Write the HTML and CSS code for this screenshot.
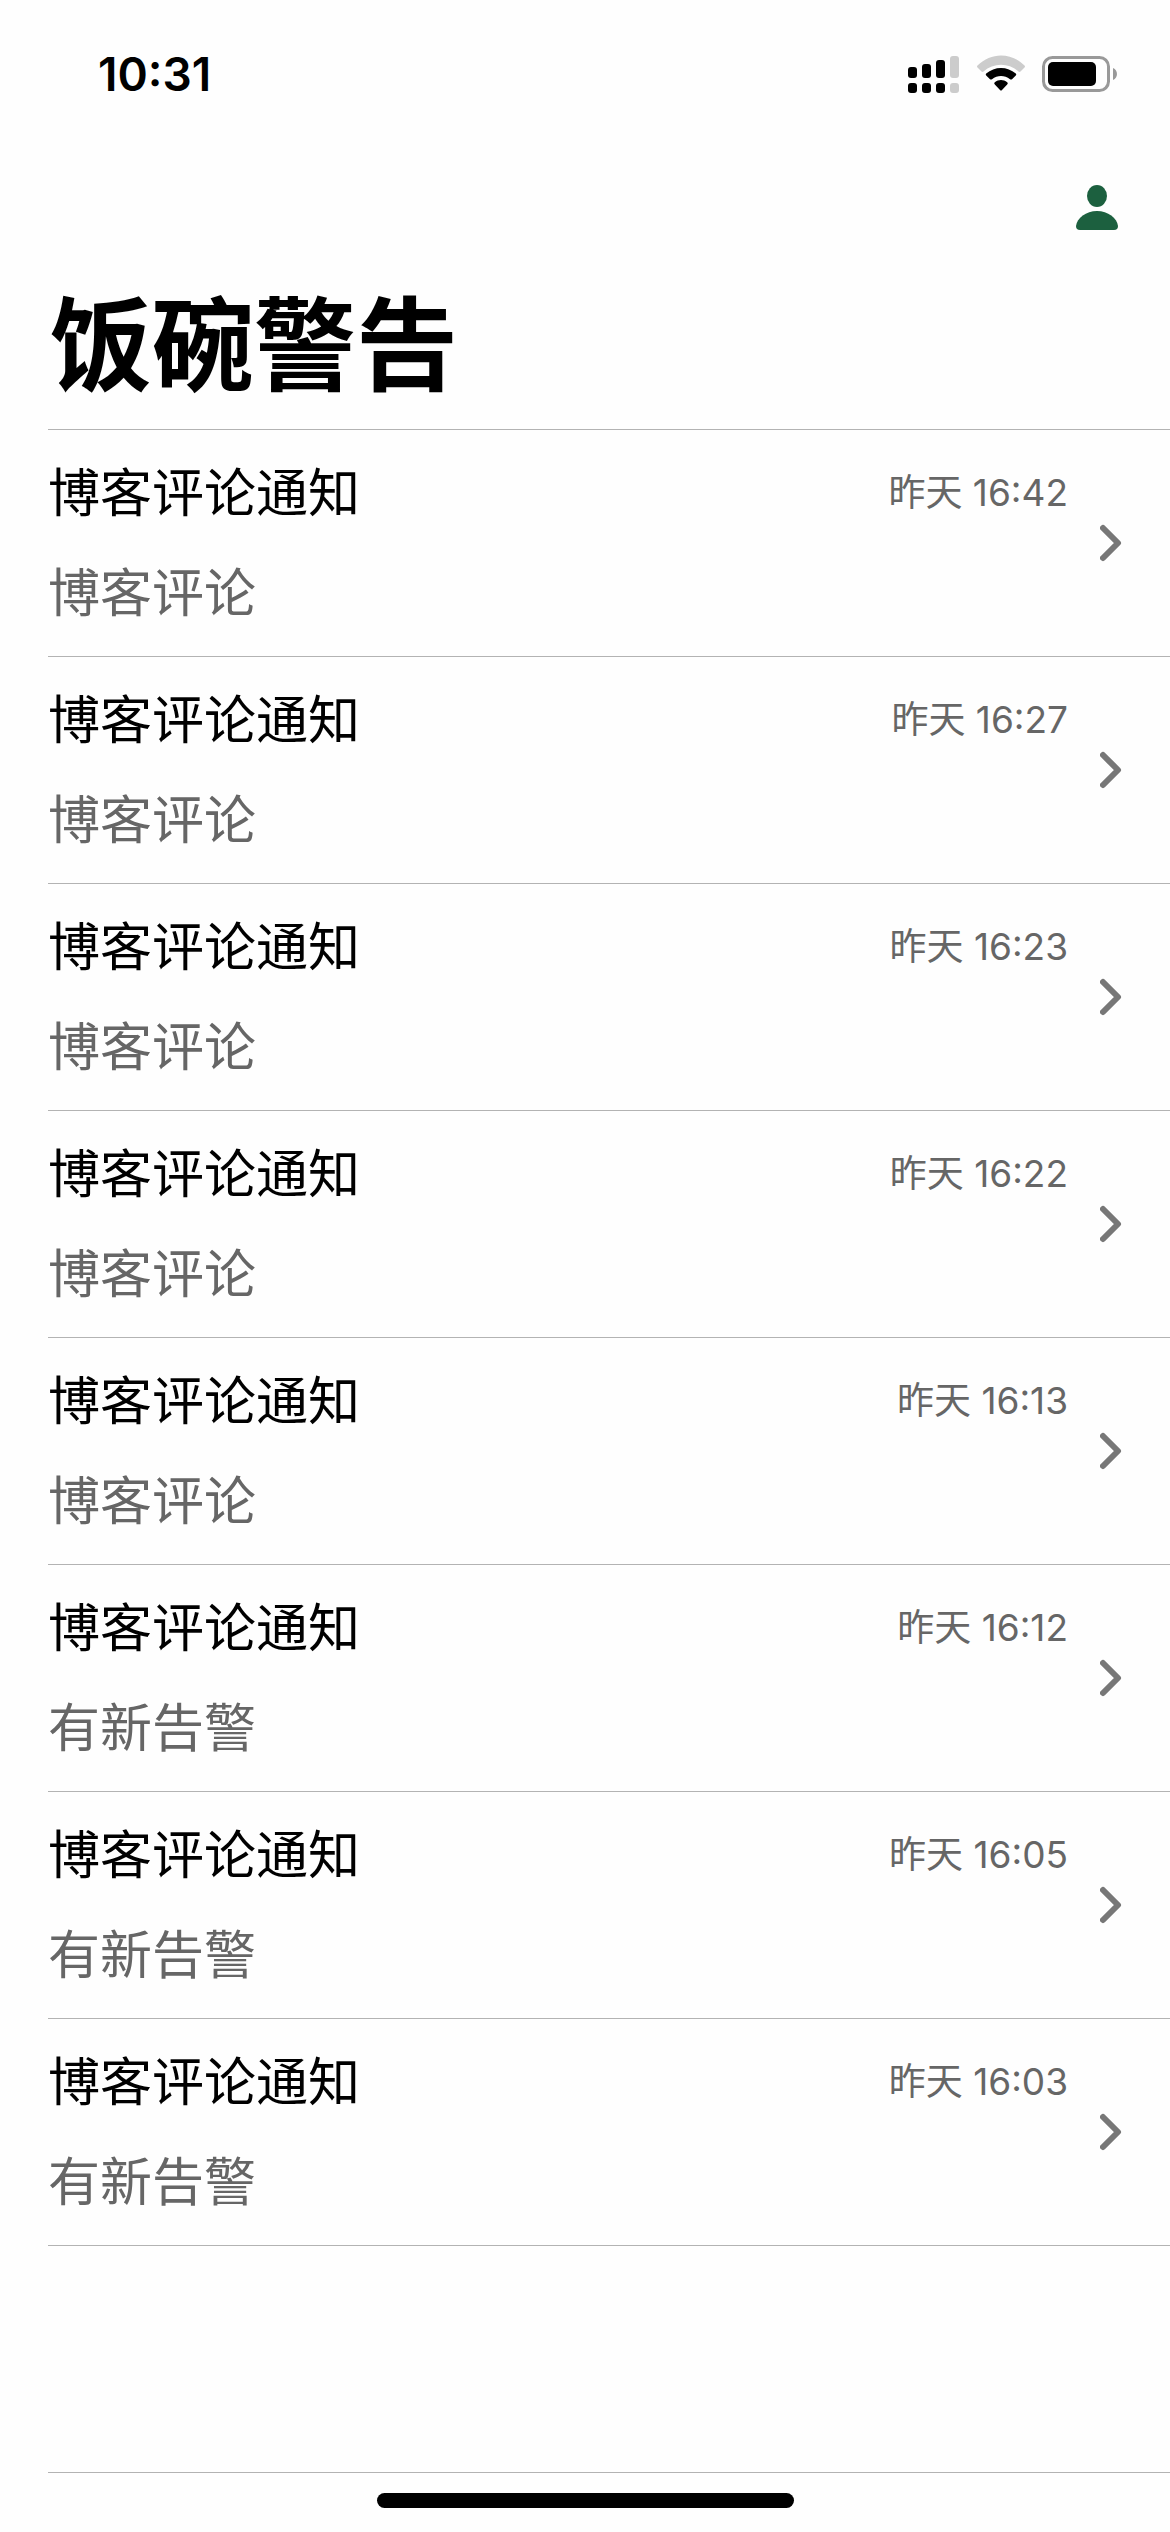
FILE: index.html
```html
<!DOCTYPE html>
<html lang="zh-CN">
<head>
    <meta charset="UTF-8">
    <meta name="viewport" content="width=device-width, initial-scale=1.0">
    <title>饭碗警告</title>
    <link rel="stylesheet" href="styles.css">
</head>
<body>
    <div class="status-bar">
        <span class="clock">10:31</span>
        <div class="status-icons">
            <svg class="icon-signal" width="52" height="38" viewBox="0 0 52 38">
                <rect x="0" y="12" width="9" height="11" rx="3"/>
                <rect x="14" y="9" width="9" height="14" rx="3"/>
                <rect x="28" y="5" width="9" height="18" rx="3"/>
                <rect class="dim" x="42" y="1" width="9" height="22" rx="3"/>
                <rect x="0" y="28" width="9" height="10" rx="3"/>
                <rect x="14" y="28" width="9" height="10" rx="3"/>
                <rect x="28" y="28" width="9" height="10" rx="3"/>
                <rect class="dim" x="42" y="28" width="9" height="10" rx="3"/>
            </svg>
            <svg class="icon-wifi" width="50" height="38" viewBox="0 0 50 38">
                <path class="dim" d="M1.5 10.5Q0.5 11.5 1.5 12.5L5.5 16.5Q6.5 17.3 7.5 16.5C17.5 7.6 32.5 7.6 42.5 16.5Q43.5 17.3 44.5 16.5L48.5 12.5Q49.5 11.5 48.5 10.5C35-3 15-3 1.5 10.5Z"/>
                <path d="M10.2 18.5Q9.2 19.5 10.2 20.5L14 24.2Q15 25 16 24.2C21.5 19.8 28.5 19.8 34 24.2Q35 25 36 24.2L39.8 20.5Q40.8 19.5 39.8 18.5C31.5 11 18.5 11 10.2 18.5Z"/>
                <path d="M18.8 27.2Q17.5 28.2 18.8 29.5L24 35Q25 36 26 35L31.2 29.5Q32.5 28.2 31.2 27.2C27.5 24.3 22.5 24.3 18.8 27.2Z"/>
            </svg>
            <svg class="icon-battery" width="76" height="38" viewBox="0 0 76 38">
                <rect class="case" x="1.5" y="2.5" width="65" height="33" rx="9"/>
                <rect x="6" y="7" width="48" height="24" rx="5"/>
                <path class="cap" d="M71 13C76.3 15 76.3 23 71 25Z"/>
            </svg>
        </div>
    </div>

    <header>
        <button class="account-button" aria-label="账户">
            <svg width="42" height="46" viewBox="0 0 42 46">
                <ellipse cx="21" cy="11" rx="10" ry="11"/>
                <path d="M4 45Q0 45 0 41C1 33 10 26 21 26S41 33 42 41Q42 45 38 45Z"/>
            </svg>
        </button>
        <h1>饭碗警告</h1>
    </header>

    <main class="message-list">
        <a class="message" href="#">
            <div class="message-text">
                <div class="message-top"><h2>博客评论通知</h2><time>昨天 16:42</time></div>
                <p>博客评论</p>
            </div>
            <svg class="chevron" viewBox="0 0 22 38"><path d="M3 4L18 19L3 34"/></svg>
        </a>
        <a class="message" href="#">
            <div class="message-text">
                <div class="message-top"><h2>博客评论通知</h2><time>昨天 16:27</time></div>
                <p>博客评论</p>
            </div>
            <svg class="chevron" viewBox="0 0 22 38"><path d="M3 4L18 19L3 34"/></svg>
        </a>
        <a class="message" href="#">
            <div class="message-text">
                <div class="message-top"><h2>博客评论通知</h2><time>昨天 16:23</time></div>
                <p>博客评论</p>
            </div>
            <svg class="chevron" viewBox="0 0 22 38"><path d="M3 4L18 19L3 34"/></svg>
        </a>
        <a class="message" href="#">
            <div class="message-text">
                <div class="message-top"><h2>博客评论通知</h2><time>昨天 16:22</time></div>
                <p>博客评论</p>
            </div>
            <svg class="chevron" viewBox="0 0 22 38"><path d="M3 4L18 19L3 34"/></svg>
        </a>
        <a class="message" href="#">
            <div class="message-text">
                <div class="message-top"><h2>博客评论通知</h2><time>昨天 16:13</time></div>
                <p>博客评论</p>
            </div>
            <svg class="chevron" viewBox="0 0 22 38"><path d="M3 4L18 19L3 34"/></svg>
        </a>
        <a class="message" href="#">
            <div class="message-text">
                <div class="message-top"><h2>博客评论通知</h2><time>昨天 16:12</time></div>
                <p>有新告警</p>
            </div>
            <svg class="chevron" viewBox="0 0 22 38"><path d="M3 4L18 19L3 34"/></svg>
        </a>
        <a class="message" href="#">
            <div class="message-text">
                <div class="message-top"><h2>博客评论通知</h2><time>昨天 16:05</time></div>
                <p>有新告警</p>
            </div>
            <svg class="chevron" viewBox="0 0 22 38"><path d="M3 4L18 19L3 34"/></svg>
        </a>
        <a class="message" href="#">
            <div class="message-text">
                <div class="message-top"><h2>博客评论通知</h2><time>昨天 16:03</time></div>
                <p>有新告警</p>
            </div>
            <svg class="chevron" viewBox="0 0 22 38"><path d="M3 4L18 19L3 34"/></svg>
        </a>
        <div class="message"></div>
    </main>

    <div class="home-indicator"></div>
</body>
</html>
```
FILE: styles.css
```css
* {
    box-sizing: border-box;
}

body {
    margin: 0;
    min-height: 100vh;
    display: flex;
    flex-direction: column;
    background-color: #fefefe;
    color: #000;
    font-family: Inter, "Noto Sans CJK SC", sans-serif;
}

h1, h2, p {
    margin: 0;
}

.status-bar {
    display: flex;
    justify-content: space-between;
    align-items: center;
    padding: 44px 52px 0 98px;
}

.clock {
    font-size: 46px;
    font-weight: 600;
    line-height: 60px;
}

.status-icons {
    display: flex;
    align-items: center;
    gap: 16px;
}

.dim {
    fill: #ccc;
}

.case {
    fill: none;
    stroke: #999;
    stroke-width: 3;
}

.cap {
    fill: #999;
}

header {
    display: flex;
    flex-direction: column;
    padding: 71px 48px 0 50px;
}

.account-button {
    align-self: flex-end;
    display: flex;
    padding: 10px 4px;
    border: none;
    background: none;
    fill: #1c603f;
}

h1 {
    font-size: 102px;
    font-weight: 700;
    line-height: 120px;
    margin: 45px 0 23px;
}

.message-list {
    margin-left: 48px;
    border-top: 1px solid #b3b3b3;
}

.message {
    display: flex;
    align-items: center;
    gap: 32px;
    height: 227px;
    padding-right: 48px;
    border-bottom: 1px solid #b3b3b3;
    color: inherit;
    text-decoration: none;
}

.message-text {
    flex: 1;
    padding-top: 2px;
}

.message-top {
    display: flex;
    justify-content: space-between;
    align-items: flex-start;
    margin-bottom: 28px;
}

h2, p {
    font-size: 52px;
    font-weight: 400;
    line-height: 72px;
}

time {
    font-size: 37px;
    line-height: 70px;
    color: #666;
}

p {
    color: #666;
}

.chevron {
    width: 22px;
    height: 38px;
    fill: none;
    stroke: #777;
    stroke-width: 6;
    stroke-linecap: round;
    stroke-linejoin: round;
}

.home-indicator {
    width: 417px;
    height: 15px;
    margin: auto auto 24px;
    border-radius: 8px;
    background-color: #000;
}
```
